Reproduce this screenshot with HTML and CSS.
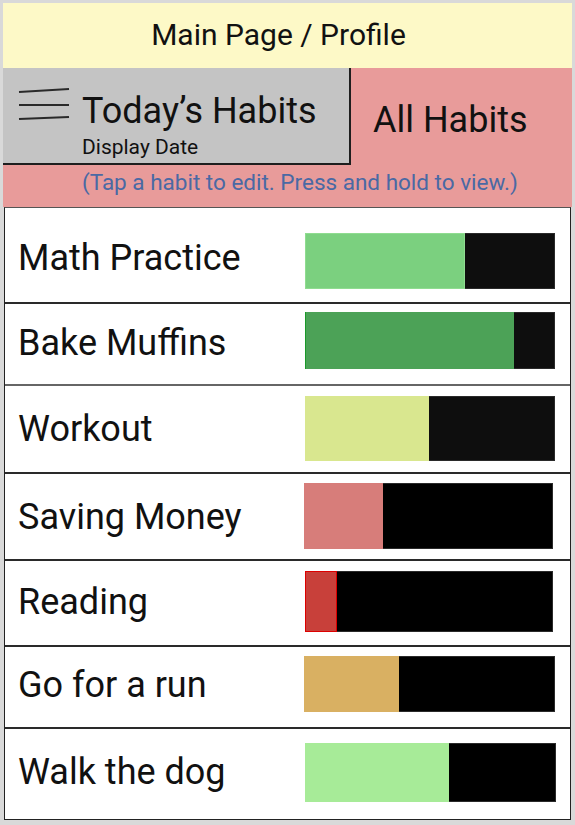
FILE: index.html
```html
<!DOCTYPE html>
<html lang="en">
<head>
<meta charset="utf-8">
<title>Today's Habits</title>
<link rel="stylesheet" href="styles.css">
</head>
<body>
<div class="app">
  <header class="title">Main Page / Profile</header>
  <nav class="nav">
    <div class="tabs">
      <div class="tab tab-active">
        <svg class="menu" width="52" height="36" viewBox="0 0 52 36">
          <path d="M1 5 L51 2" />
          <path d="M1 18 L51 18" />
          <path d="M1 32 L51 30" />
        </svg>
        <div class="tab-text">
          <div class="tab-title">Today’s Habits</div>
          <div class="tab-sub">Display Date</div>
        </div>
      </div>
      <div class="tab tab-other">All Habits</div>
    </div>
    <div class="hint">(Tap a habit to edit. Press and hold to view.)</div>
  </nav>
  <ul class="list">
    <li class="row row-1"><span class="name">Math Practice</span><div class="bar track-soft"><div class="fill fill-math" style="width:64.4%"></div></div></li>
    <li class="row row-2"><span class="name">Bake Muffins</span><div class="bar track-soft"><div class="fill fill-bake" style="width:84.4%"></div></div></li>
    <li class="row row-3"><span class="name">Workout</span><div class="bar track-soft"><div class="fill fill-workout" style="width:50%"></div></div></li>
    <li class="row row-4"><span class="name">Saving Money</span><div class="bar"><div class="fill fill-saving" style="width:32%"></div></div></li>
    <li class="row row-5"><span class="name">Reading</span><div class="bar"><div class="fill fill-reading" style="width:13%"></div></div></li>
    <li class="row row-6"><span class="name">Go for a run</span><div class="bar"><div class="fill fill-run" style="width:38.2%"></div></div></li>
    <li class="row row-7"><span class="name">Walk the dog</span><div class="bar"><div class="fill fill-dog" style="width:58%"></div></div></li>
  </ul>
</div>
</body>
</html>
```
FILE: styles.css
```css
* { box-sizing: border-box; }
html, body { margin: 0; padding: 0; }
body {
  background: #d9d9d9;
  font-family: Roboto, "Noto Sans", "Liberation Sans", sans-serif;
  color: #111;
  width: 575px;
  height: 825px;
  overflow: hidden;
}
.app {
  margin: 3px 3px 0 3px;
  width: 569px;
}
.title {
  height: 65px;
  background: #fdf9c7;
  display: flex;
  align-items: center;
  justify-content: center;
  font-size: 30px;
  padding: 0 18px 3px 0;
}
.nav { background: #e89b9a; }
.tabs {
  display: flex;
  height: 97px;
}
.tab-active {
  width: 348px;
  background: #c4c4c4;
  border-right: 2px solid #1e1e1e;
  border-bottom: 2px solid #1e1e1e;
  display: flex;
  align-items: flex-start;
  padding: 18px 0 0 15px;
}
.menu {
  margin-top: 1px;
  flex: none;
}
.menu path {
  stroke: #2a2a2a;
  stroke-width: 2;
  fill: none;
}
.tab-text {
  margin-left: 12px;
  margin-top: 5px;
}
.tab-title {
  font-size: 36px;
  line-height: 40px;
}
.tab-sub {
  font-size: 21px;
  line-height: 24px;
  margin-top: 4px;
}
.tab-other {
  flex: 1;
  font-size: 36px;
  line-height: 40px;
  padding: 32px 0 0 22px;
}
.hint {
  height: 42px;
  padding: 5px 0 0 79px;
  color: #4a69a4;
  font-size: 22.5px;
  line-height: 24px;
  white-space: nowrap;
}
.list {
  list-style: none;
  margin: 0 1px;
  padding: 0;
  background: #fff;
  border: 1px solid #222;
  border-top: 1px solid #555;
}
.row {
  display: flex;
  justify-content: space-between;
  align-items: flex-start;
  padding: 0 15px 0 13px;
  border-top: 2px solid #2a2a2a;
}
.row-1 { border-top: none; height: 94px; }
.row-2 { height: 82px; }
.row-3 { height: 88px; border-top-color: #666; }
.row-4 { height: 87px; }
.row-5 { height: 86px; }
.row-6 { height: 82px; }
.row-7 { height: 92px; }
.name {
  align-self: center;
  font-size: 36px;
  line-height: 40px;
  white-space: nowrap;
}
.row-1 .name { margin-top: 6px; }
.row-2 .name { margin-top: -3px; }
.row-5 .name { margin-top: -2px; }
.row-6 .name { margin-top: -5px; }
.row-7 .name { margin-top: -4px; }
.bar {
  width: 250px;
  flex: none;
  background: #000;
  border: 1px solid #2a2a2a;
  display: flex;
}
.track-soft { background: #0e0e0e; }
.fill { margin: -1px 0 -1px -1px; height: calc(100% + 2px); }
.row-1 .bar { margin-top: 25px; height: 56px; }
.row-2 .bar { margin-top: 8px; height: 57px; }
.row-3 .bar { margin-top: 10px; height: 65px; }
.row-4 .bar { margin-top: 9px; height: 66px; margin-right: 2px; width: 249px; }
.row-5 .bar { margin-top: 10px; height: 61px; margin-right: 2px; width: 248px; }
.row-6 .bar { margin-top: 9px; height: 56px; width: 251px; }
.row-7 .bar { margin-top: 14px; height: 59px; margin-right: -1px; width: 251px; }
.fill-math { background: #7bd07f; border: 1px solid #8fdc90; }
.fill-bake { background: #4ca257; border-left: 1px solid #1a9a2a; }
.fill-workout { background: #d9e78f; }
.fill-saving { background: #d77d7a; }
.fill-reading { background: #c8403a; border: 1px solid #d00; }
.fill-run { background: #d9b062; }
.fill-dog { background: #a7eb98; }
```
